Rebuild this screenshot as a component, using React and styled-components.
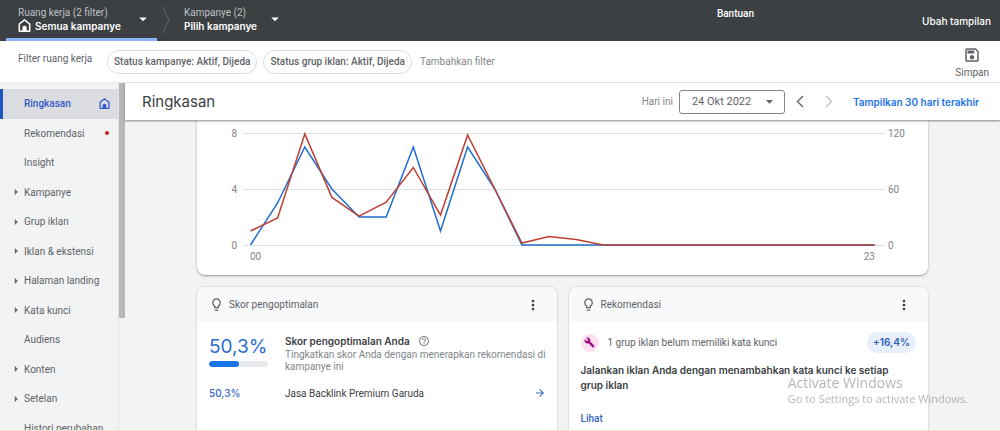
import React from "react";
import styled, { createGlobalStyle } from "styled-components";
import {
  MdArrowDropDown,
  MdArrowForward,
  MdArrowRight,
  MdBuild,
  MdHelpOutline,
  MdLightbulbOutline,
  MdMoreVert,
  MdOutlineSave,
} from "react-icons/md";

const text = `Roboto, "Liberation Sans", sans-serif`;
const display = `Inter, "Liberation Sans", sans-serif`;

const GlobalStyle = createGlobalStyle`
  * {
    box-sizing: border-box;
  }
  body {
    margin: 0;
    background: #f1f3f4;
    color: #5f6368;
    font-family: ${text};
    font-size: 10px;
  }
  button, select {
    margin: 0;
    padding: 0;
    border: 0;
    background: none;
    color: inherit;
    font: inherit;
    text-align: left;
    cursor: pointer;
  }
  a {
    color: inherit;
    text-decoration: none;
  }
  h1, h2, h3, p, ul {
    margin: 0;
    padding: 0;
  }
  svg {
    flex: none;
  }
`;

const Page = styled.div`
  display: flex;
  flex-direction: column;
  height: 100vh;
  overflow: hidden;
  border-bottom: 1px solid #fbdcc0;
`;

const TopBar = styled.header`
  display: flex;
  flex: none;
  height: 41px;
  padding: 0 9px 0 6px;
  background: #3c4043;
  color: #fff;
`;

const Picker = styled.button`
  display: flex;
  align-items: center;
  justify-content: space-between;
  width: ${(props) => (props.$active ? 151 : 117)}px;
  padding: 0 5px 0 12px;
  border-bottom: 3px solid ${(props) => (props.$active ? "#8ab4f8" : "transparent")};
`;

const PickerLabel = styled.span`
  display: block;
  color: #bdc1c6;
  line-height: 13px;
`;

const PickerValue = styled.span`
  display: flex;
  align-items: center;
  gap: 4px;
  font-family: ${display};
  font-weight: 600;
  line-height: 14px;
  white-space: nowrap;
`;

const TopLinks = styled.nav`
  display: flex;
  flex: 1;
  justify-content: flex-end;
  gap: 168px;
  font-weight: 500;
`;

const HelpLink = styled.a`
  padding-top: 8px;
  line-height: 12px;
`;

const ViewLink = styled.a`
  align-self: center;
  font-family: ${display};
`;

const FilterBar = styled.section`
  display: flex;
  flex: none;
  align-items: center;
  height: 42px;
  padding: 0 11px 0 18px;
  border-bottom: 1px solid #e8eaed;
  background: #fff;
`;

const FilterTitle = styled.span`
  width: 89px;
  padding-bottom: 6px;
`;

const Chip = styled.button`
  height: 24px;
  margin-right: 6px;
  padding: 0 6px;
  border: 1px solid #dadce0;
  border-radius: 12px;
  font-weight: 500;
`;

const AddFilter = styled.button`
  margin-left: 2px;
  color: #80868b;
`;

const SaveButton = styled.button`
  display: flex;
  flex-direction: column;
  align-items: center;
  gap: 3px;
  margin-left: auto;
`;

const Body = styled.div`
  display: flex;
  flex: 1;
  min-height: 0;
`;

const Sidebar = styled.nav`
  flex: none;
  width: 119px;
  padding-top: 6px;
  overflow: hidden;
  border-right: 1px solid #e3e5e8;
`;

const NavList = styled.ul`
  display: grid;
  grid-auto-rows: 1fr;
  height: 354px;
  list-style: none;
`;

const NavLink = styled.a`
  display: flex;
  align-items: center;
  height: 100%;
  padding-right: 8px;
  border-left: 3px solid ${(props) => (props.$active ? "#1a56c4" : "transparent")};
  background: ${(props) => (props.$active ? "#dadce0" : "none")};
  color: ${(props) => (props.$active ? "#3559c7" : "#5f6368")};
  font-weight: ${(props) => (props.$active ? 500 : 400)};
  white-space: nowrap;
`;

const ArrowSlot = styled.span`
  display: flex;
  justify-content: flex-end;
  width: 21px;
  padding-right: 1px;
`;

const NavEnd = styled.span`
  display: flex;
  margin-left: auto;
`;

const Dot = styled.span`
  width: 4px;
  height: 4px;
  margin-right: 1px;
  border-radius: 50%;
  background: #c5221f;
`;

const Scroll = styled.div`
  flex: none;
  width: 6px;
`;

const Thumb = styled.div`
  height: 235px;
  background: #b5b7b9;
`;

const Main = styled.main`
  display: flex;
  flex: 1;
  flex-direction: column;
  min-width: 0;
`;

const TitleBar = styled.div`
  position: relative;
  z-index: 1;
  display: flex;
  flex: none;
  align-items: center;
  height: 37px;
  padding: 0 21px 0 17px;
  background: #fff;
  box-shadow: 0 1px 2px rgba(60, 64, 67, 0.6);
`;

const Title = styled.h1`
  margin-right: auto;
  color: #3c4043;
  font-family: ${display};
  font-size: 15px;
  font-weight: 400;
`;

const DateField = styled.label`
  display: flex;
  align-items: center;
  gap: 6px;
  color: #80868b;
`;

const SelectBox = styled.span`
  display: grid;
  align-items: center;
  width: 106px;
  color: #5f6368;

  svg {
    grid-area: 1 / 1;
    justify-self: end;
    margin-right: 7px;
    pointer-events: none;
  }
`;

const DateSelect = styled.select`
  grid-area: 1 / 1;
  height: 24px;
  padding: 0 12px;
  appearance: none;
  border: 1px solid #80868b;
  border-radius: 3px;
  font-size: 11px;
`;

const StepButton = styled.button`
  display: flex;
  margin-left: ${(props) => (props.$first ? 11 : 21)}px;
  color: ${(props) => (props.disabled ? "#bdc1c6" : "#5f6368")};
`;

const RangeLink = styled.a`
  margin-left: 20px;
  color: #1a73e8;
  font-family: ${display};
  font-weight: 600;
`;

const Canvas = styled.div`
  display: grid;
  grid-template-columns: 1fr 1fr;
  grid-template-rows: 155px 1fr;
  gap: 12px;
  flex: 1;
  min-height: 0;
  padding: 0 72px;
`;

const Card = styled.section`
  min-width: 0;
  border-radius: 8px 8px 0 0;
  background: #fff;
  box-shadow: 0 0 2px rgba(60, 64, 67, 0.4);
`;

const ChartCard = styled(Card)`
  grid-column: 1 / -1;
  border-radius: 0 0 8px 8px;
  box-shadow: 0 1px 2px rgba(60, 64, 67, 0.5);

  svg {
    display: block;
    width: 100%;
    height: 155px;
  }
`;

const CardHead = styled.header`
  display: flex;
  align-items: center;
  gap: 5px;
  height: 35px;
  padding: 0 16px 0 12px;
  border-radius: 8px 8px 0 0;
  background: #f8f9fa;
`;

const CardTitle = styled.h2`
  flex: 1;
  font-size: 10px;
  font-weight: 400;
`;

const MenuButton = styled.button`
  display: flex;
  color: #3c4043;
`;

const ScoreGrid = styled.div`
  display: grid;
  grid-template-columns: 76px 1fr auto;
  align-items: center;
  padding: 11px 5px 0 12px;
`;

const Score = styled.div`
  align-self: start;
  color: #2c6bd6;
  font-family: ${display};
  font-size: 19px;
  line-height: 28px;
`;

const Bar = styled.div`
  width: 59px;
  height: 6px;
  overflow: hidden;
  border-radius: 3px;
  background: #e8eaed;
`;

const BarFill = styled.div`
  height: 100%;
  border-radius: 3px;
  background: #1a73e8;
`;

const ScoreText = styled.div`
  grid-column: 2 / -1;
  color: #80868b;
  line-height: 12px;
`;

const ScoreHeading = styled.h3`
  display: flex;
  align-items: center;
  gap: 8px;
  color: #3c4043;
  font-family: ${display};
  font-size: 10px;
  font-weight: 600;
  line-height: 16px;

  svg {
    color: #80868b;
  }
`;

const AccountScore = styled.span`
  margin-top: 14px;
  color: #3566c8;
  font-family: ${display};
  font-weight: 500;
`;

const AccountName = styled.span`
  margin-top: 14px;
  color: #3c4043;
`;

const AccountLink = styled.a`
  display: flex;
  margin: 14px 6px 0 0;
  color: #3566c8;
`;

const Tip = styled.div`
  padding: 10px 12px 0;
`;

const TipRow = styled.div`
  display: flex;
  align-items: center;
  gap: 9px;
`;

const TipIcon = styled.span`
  display: grid;
  place-items: center;
  width: 18px;
  height: 18px;
  border-radius: 50%;
  background: #fde1f1;
  color: #a50e84;
`;

const Uplift = styled.span`
  margin-left: auto;
  padding: 0 6px;
  border-radius: 11px;
  background: #e8eefb;
  color: #2a5cb8;
  font-family: ${display};
  font-weight: 600;
  line-height: 21px;
`;

const TipHeading = styled.h3`
  padding: 10px 16px 20px 0;
  color: #3c4043;
  font-family: ${display};
  font-size: 10px;
  font-weight: 600;
  line-height: 15px;
`;

const TipLink = styled.a`
  color: #3566c8;
  font-weight: 500;
`;

const Watermark = styled.div`
  position: fixed;
  right: 32px;
  bottom: 25px;
  color: rgba(140, 143, 146, 0.65);
  font-family: "Open Sans", "Noto Sans", sans-serif;
  font-size: 11px;
  line-height: 14px;
  pointer-events: none;
`;

const WatermarkTitle = styled.div`
  font-size: 14px;
  line-height: 18px;
`;

const HomeIcon = ({ size }) => (
  <svg width={size} height={size} viewBox="0 0 12 12" fill="none" stroke="currentColor">
    <path d="M1.2 11.3V4.6L6 .9l4.8 3.7v6.7z" strokeWidth="1.4" strokeLinejoin="round" />
    <path d="M4 11V8.2a2 2 0 0 1 4 0V11z" fill="currentColor" stroke="none" />
  </svg>
);

const Chevron = ({ right }) => (
  <svg width="8" height="13" viewBox="0 0 8 13" fill="none" stroke="currentColor">
    <path d={right ? "M1 1l5.5 5.5L1 12" : "M7 1L1.5 6.5 7 12"} strokeWidth="1.4" />
  </svg>
);

const Divider = () => (
  <svg width="15" height="41" viewBox="0 0 15 41" fill="none" stroke="#5f6368">
    <path d="M5 6l7 14-7 14" />
  </svg>
);

const navItems = [
  { label: "Ringkasan", active: true },
  { label: "Rekomendasi", dot: true },
  { label: "Insight" },
  { label: "Kampanye", open: true },
  { label: "Grup iklan", open: true },
  { label: "Iklan & ekstensi", open: true },
  { label: "Halaman landing", open: true },
  { label: "Kata kunci", open: true },
  { label: "Audiens" },
  { label: "Konten", open: true },
  { label: "Setelan", open: true },
  { label: "Histori perubahan" },
];

// hourly values, 00 - 23
const clicks = [0, 3, 7, 4, 2, 2, 7, 1, 7, 4, 0, 0, 0, 0, 0, 0, 0, 0, 0, 0, 0, 0, 0, 0];
const views = [15, 29, 119, 51, 31, 46, 83, 32, 118, 60, 2, 9, 6, 0, 0, 0, 0, 0, 0, 0, 0, 0, 0, 0];

const toPoints = (values, max) =>
  values
    .map((v, i) => `${(53.5 + i * 27.14).toFixed(1)},${(125 - (v / max) * 112).toFixed(1)}`)
    .join(" ");

const Chart = () => (
  <svg viewBox="0 0 731 155" fontFamily={text} fontSize="10" fill="#80868b">
    {[13, 69, 125].map((y, i) => (
      <g key={y}>
        <line x1="47" x2="687" y1={y + 0.5} y2={y + 0.5} stroke="#dfe1e4" />
        <text x="40" y={y + 4} textAnchor="end">{[8, 4, 0][i]}</text>
        <text x="691" y={y + 4}>{[120, 60, 0][i]}</text>
      </g>
    ))}
    <text x="53" y="140">00</text>
    <text x="678" y="140" textAnchor="end">23</text>
    <polyline points={toPoints(clicks, 8)} fill="none" stroke="#1f6fce" strokeWidth="1.5" />
    <polyline points={toPoints(views, 120)} fill="none" stroke="#bd3f32" strokeWidth="1.5" />
  </svg>
);

const SideNav = () => (
  <Sidebar>
    <NavList>
      {navItems.map((item) => (
        <li key={item.label}>
          <NavLink href="#" $active={item.active}>
            <ArrowSlot>{item.open && <MdArrowRight size={14} />}</ArrowSlot>
            {item.label}
            <NavEnd>
              {item.active && <HomeIcon size={11} />}
              {item.dot && <Dot />}
            </NavEnd>
          </NavLink>
        </li>
      ))}
    </NavList>
  </Sidebar>
);

const ScoreCard = () => (
  <Card>
    <CardHead>
      <MdLightbulbOutline size={15} />
      <CardTitle>Skor pengoptimalan</CardTitle>
      <MenuButton aria-label="Menu">
        <MdMoreVert size={16} />
      </MenuButton>
    </CardHead>
    <ScoreGrid>
      <Score>
        50,3%
        <Bar>
          <BarFill style={{ width: "50.3%" }} />
        </Bar>
      </Score>
      <ScoreText>
        <ScoreHeading>
          Skor pengoptimalan Anda <MdHelpOutline size={12} />
        </ScoreHeading>
        <p>Tingkatkan skor Anda dengan menerapkan rekomendasi di kampanye ini</p>
      </ScoreText>
      <AccountScore>50,3%</AccountScore>
      <AccountName>Jasa Backlink Premium Garuda</AccountName>
      <AccountLink href="#" aria-label="Jasa Backlink Premium Garuda">
        <MdArrowForward size={12} />
      </AccountLink>
    </ScoreGrid>
  </Card>
);

const TipCard = () => (
  <Card>
    <CardHead>
      <MdLightbulbOutline size={15} />
      <CardTitle>Rekomendasi</CardTitle>
      <MenuButton aria-label="Menu">
        <MdMoreVert size={16} />
      </MenuButton>
    </CardHead>
    <Tip>
      <TipRow>
        <TipIcon>
          <MdBuild size={11} />
        </TipIcon>
        1 grup iklan belum memiliki kata kunci
        <Uplift>+16,4%</Uplift>
      </TipRow>
      <TipHeading>
        Jalankan iklan Anda dengan menambahkan kata kunci ke setiap grup iklan
      </TipHeading>
      <TipLink href="#">Lihat</TipLink>
    </Tip>
  </Card>
);

const App = () => (
  <>
    <GlobalStyle />
    <Page>
      <TopBar>
        <Picker $active>
          <span>
            <PickerLabel>Ruang kerja (2 filter)</PickerLabel>
            <PickerValue>
              <HomeIcon size={13} /> Semua kampanye
            </PickerValue>
          </span>
          <MdArrowDropDown size={18} />
        </Picker>
        <Divider />
        <Picker>
          <span>
            <PickerLabel>Kampanye (2)</PickerLabel>
            <PickerValue>Pilih kampanye</PickerValue>
          </span>
          <MdArrowDropDown size={18} />
        </Picker>
        <TopLinks>
          <HelpLink href="#">Bantuan</HelpLink>
          <ViewLink href="#">Ubah tampilan</ViewLink>
        </TopLinks>
      </TopBar>
      <FilterBar>
        <FilterTitle>Filter ruang kerja</FilterTitle>
        <Chip>Status kampanye: Aktif, Dijeda</Chip>
        <Chip>Status grup iklan: Aktif, Dijeda</Chip>
        <AddFilter>Tambahkan filter</AddFilter>
        <SaveButton>
          <MdOutlineSave size={18} />
          Simpan
        </SaveButton>
      </FilterBar>
      <Body>
        <SideNav />
        <Scroll>
          <Thumb />
        </Scroll>
        <Main>
          <TitleBar>
            <Title>Ringkasan</Title>
            <DateField>
              Hari ini
              <SelectBox>
                <DateSelect>
                  <option>24 Okt 2022</option>
                </DateSelect>
                <MdArrowDropDown size={17} />
              </SelectBox>
            </DateField>
            <StepButton $first aria-label="Sebelumnya">
              <Chevron />
            </StepButton>
            <StepButton disabled aria-label="Berikutnya">
              <Chevron right />
            </StepButton>
            <RangeLink href="#">Tampilkan 30 hari terakhir</RangeLink>
          </TitleBar>
          <Canvas>
            <ChartCard>
              <Chart />
            </ChartCard>
            <ScoreCard />
            <TipCard />
          </Canvas>
        </Main>
      </Body>
    </Page>
    <Watermark>
      <WatermarkTitle>Activate Windows</WatermarkTitle>
      Go to Settings to activate Windows.
    </Watermark>
  </>
);

export default App;
